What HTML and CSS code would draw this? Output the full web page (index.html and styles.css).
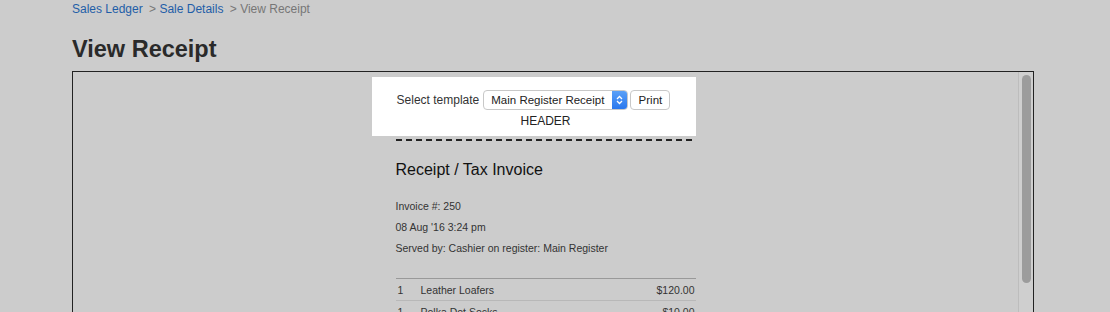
FILE: index.html
```html
<!DOCTYPE html>
<html>
<head>
    <meta name="viewport" content="width=device-width">
    <title>View Receipt</title>
    <link rel="stylesheet" href="styles.css">
</head>
<body>
<div class="page">
    <div class="crumbs">
        <a href="#">Sales Ledger</a>
        <span class="sep">&gt;</span> <a href="#">Sale Details</a>
        <span class="sep">&gt; View Receipt</span>
    </div>

    <h1>View Receipt</h1>

    <div class="frame">
        <div class="frame-body">
            <div class="receipt">
                <div class="controls">
                    <div class="pick">
                        Select template
                        <span class="select">Main Register Receipt<span class="arrows">
                            <svg width="7" height="10" viewBox="0 0 7 10"><path d="M1 4 L3.5 1.5 L6 4 M1 6 L3.5 8.5 L6 6" fill="none" stroke="#fff" stroke-width="1.3"/></svg>
                        </span></span>
                        <button class="btn">Print</button>
                    </div>
                    <div class="header-label">HEADER</div>
                </div>
                <div class="dash"></div>

                <h2>Receipt / Tax Invoice</h2>
                <p class="meta">Invoice #: 250</p>
                <p class="meta">08 Aug '16 3:24 pm</p>
                <p class="meta">Served by: Cashier on register: Main Register</p>

                <table class="lines">
                    <tr><td class="qty">1</td><td>Leather Loafers</td><td class="amt">$120.00</td></tr>
                    <tr><td class="qty">1</td><td>Polka Dot Socks</td><td class="amt">$10.00</td></tr>
                    <tr><td class="qty">1</td><td>Wool Scarf</td><td class="amt">$35.00</td></tr>
                </table>
            </div>
        </div>
        <div class="track"><div class="thumb"></div></div>
    </div>
</div>
</body>
</html>
```

FILE: styles.css
```css
html, body { margin: 0; height: 100%; overflow: hidden; }
body {
    background: #cccccc;
    font-family: "Liberation Sans", Arial, sans-serif;
    color: #222;
}
.page { padding: 0 76px 0 72px; }

.crumbs { font-size: 12px; line-height: 16px; padding-top: 1px; color: #777; }
.crumbs a { color: #1f5ea8; text-decoration: none; }
.crumbs .sep { margin-left: 3px; }

h1 {
    font-size: 23.5px;
    font-weight: bold;
    color: #2a2a2a;
    margin: 19px 0 0;
    line-height: 27px;
}

.frame {
    margin-top: 8px;
    border: 1px solid #222;
    height: 280px;
    display: flex;
}
.frame-body { flex: 1; display: flex; justify-content: center; padding-top: 5px; }
.track {
    width: 14px;
    border-left: 1px solid #bdbdbd;
    background: #cfcfcf;
    padding-top: 3px;
    display: flex;
    justify-content: center;
}
.thumb { width: 9px; height: 208px; border-radius: 5px; background: #9c9c9c; }

.receipt { width: 300px; }

.controls {
    background: #fff;
    margin-left: -24px;
    padding: 13px 0 8px 24px;
    font-size: 12px;
    color: #333;
}
.pick { display: flex; align-items: center; justify-content: center; gap: 4px; margin-left: -24px; }
.select {
    display: inline-flex;
    align-items: center;
    height: 18px;
    border: 1px solid #c8c8c8;
    border-radius: 4px;
    padding-left: 7px;
    font-size: 11.5px;
    color: #222;
    overflow: hidden;
}
.arrows {
    margin-left: 8px;
    width: 15px;
    height: 18px;
    background: linear-gradient(#5aa0f7, #2a78ee);
    display: flex;
    align-items: center;
    justify-content: center;
}
.btn {
    font: 11.5px "Liberation Sans", Arial, sans-serif;
    color: #222;
    height: 20px;
    width: 40px;
    padding: 0;
    border: 1px solid #c8c8c8;
    border-radius: 4px;
    background: #fff;
    margin-left: -2px;
}
.header-label { text-align: center; margin-top: 4px; line-height: 14px; color: #222; }

.dash {
    height: 2px;
    margin-top: 3px;
    background: repeating-linear-gradient(90deg, #222 0 6px, transparent 6px 10px);
}

h2 { font-size: 16px; font-weight: normal; margin: 19px 0 0; line-height: 20px; color: #111; }

.meta { font-size: 10.5px; margin: 0; line-height: 21px; color: #333; }
h2 + .meta { margin-top: 16px; }

.lines { width: 100%; border-collapse: collapse; margin-top: 19px; font-size: 10.5px; color: #333; }
.lines td { border-top: 1px solid #999; height: 21px; padding: 0; }
.lines tr + tr td { border-top-color: #b8b8b8; }
.lines .qty { width: 23px; padding-left: 2px; }
.lines .amt { text-align: right; padding-right: 1px; }
```
